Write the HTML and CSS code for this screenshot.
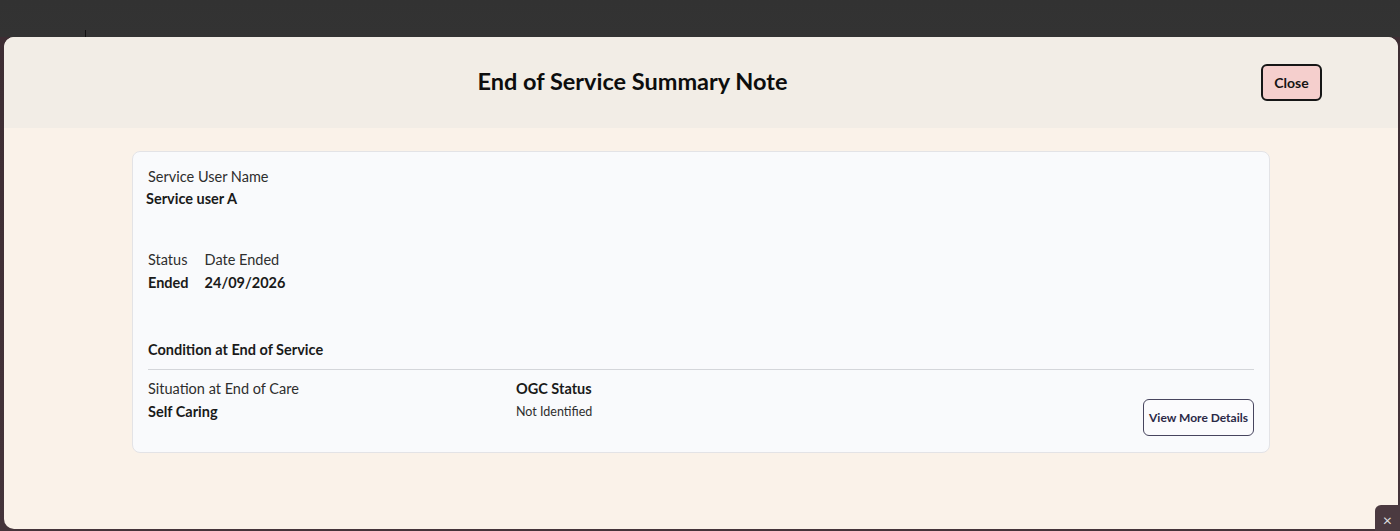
FILE: index.html
```html
<!DOCTYPE html>
<html lang="en">
<head>
<meta charset="utf-8">
<title>End of Service Summary Note</title>
<link rel="stylesheet" href="styles.css">
</head>
<body>
<div class="screen">
  <span class="caret"></span>
  <div class="modal">
    <header class="modal-header">
      <h1 class="modal-title">End of Service Summary Note</h1>
      <button class="btn-close" type="button">Close</button>
    </header>
    <main class="modal-body">
      <section class="card">
        <div class="field field-name">
          <div class="label">Service User Name</div>
          <div class="value value-name">Service user A</div>
        </div>
        <div class="status-row">
          <div class="field">
            <div class="label">Status</div>
            <div class="value value-status">Ended</div>
          </div>
          <div class="field">
            <div class="label">Date Ended</div>
            <div class="value value-status">24/09/2026</div>
          </div>
        </div>
        <h2 class="section-title">Condition at End of Service</h2>
        <hr class="divider">
        <div class="condition-row">
          <div class="field">
            <div class="label">Situation at End of Care</div>
            <div class="value value-status">Self Caring</div>
          </div>
          <div class="field">
            <div class="label label-strong">OGC Status</div>
            <div class="value-small">Not Identified</div>
          </div>
          <button class="btn-details" type="button">View More Details</button>
        </div>
      </section>
    </main>
  </div>
  <div class="dock-tab">×</div>
</div>
</body>
</html>
```
FILE: styles.css
```css
* { box-sizing: border-box; }

html, body {
  margin: 0;
  padding: 0;
}

body {
  width: 1400px;
  height: 531px;
  overflow: hidden;
  font-family: "Lato", "Liberation Sans", sans-serif;
  background: linear-gradient(to bottom, #323232 0, #333 37px, #3d2d33 37px, #44343a 100%);
}

.screen {
  position: relative;
  height: 531px;
  padding: 37px 2px 2px 4px;
}

.caret {
  position: absolute;
  left: 85px;
  top: 30px;
  width: 1px;
  height: 7px;
  background: #111;
}

.modal {
  height: 492px;
  display: flex;
  flex-direction: column;
  border-radius: 10px;
  overflow: hidden;
  background: #faf2e9;
}

.modal-header {
  height: 91px;
  flex: none;
  display: flex;
  align-items: center;
  gap: 76px;
  padding: 0 76px;
  background: #f2ede6;
}

.modal-title {
  flex: 1;
  margin: 0;
  padding-bottom: 4px;
  text-align: center;
  font-size: 23.5px;
  font-weight: 700;
  color: #0d0d0d;
}

.btn-close {
  width: 61px;
  height: 37px;
  padding: 0;
  border: 2px solid #161616;
  border-radius: 6px;
  background: #f5cfcd;
  font-family: inherit;
  font-size: 14px;
  font-weight: 700;
  color: #141414;
}

.modal-body {
  flex: 1;
  padding: 23px 128px 0;
}

.card {
  height: 302px;
  padding: 15px 15px 0;
  border: 1px solid #e3e3e6;
  border-radius: 8px;
  background: #f9fafc;
}

.label {
  font-size: 14.5px;
  line-height: 20px;
  color: #2e2e2e;
}

.label-strong {
  font-weight: 700;
  color: #1a1a1a;
}

.value {
  font-size: 14.5px;
  line-height: 20px;
  font-weight: 700;
  color: #1a1a1a;
}

.value-name {
  margin-top: 2px;
  margin-left: -2px;
}

.value-status {
  margin-top: 3px;
}

.value-small {
  margin-top: 4px;
  font-size: 12.5px;
  line-height: 18px;
  color: #2e2e2e;
}

.status-row {
  display: flex;
  gap: 16px;
  margin-top: 41px;
}

.section-title {
  margin: 47px 0 0;
  font-size: 14.5px;
  line-height: 20px;
  font-weight: 700;
  color: #1a1a1a;
}

.divider {
  margin: 9px 0 0;
  border: 0;
  border-top: 1px solid #d4d6da;
}

.condition-row {
  display: grid;
  grid-template-columns: 368px 1fr auto;
  align-items: start;
  margin-top: 9px;
}

.btn-details {
  margin-top: 20px;
  width: 111px;
  height: 37px;
  padding: 0;
  border: 1px solid #47455e;
  border-radius: 6px;
  background: #fbfbfd;
  font-family: inherit;
  font-size: 12px;
  font-weight: 700;
  color: #2b2947;
}

.dock-tab {
  position: absolute;
  right: 0;
  bottom: 0;
  width: 25px;
  height: 26px;
  display: flex;
  align-items: center;
  justify-content: center;
  padding-top: 3px;
  border-radius: 6px 0 0 0;
  background: #4b3a40;
  color: #ddd;
  font-size: 16px;
}
```
